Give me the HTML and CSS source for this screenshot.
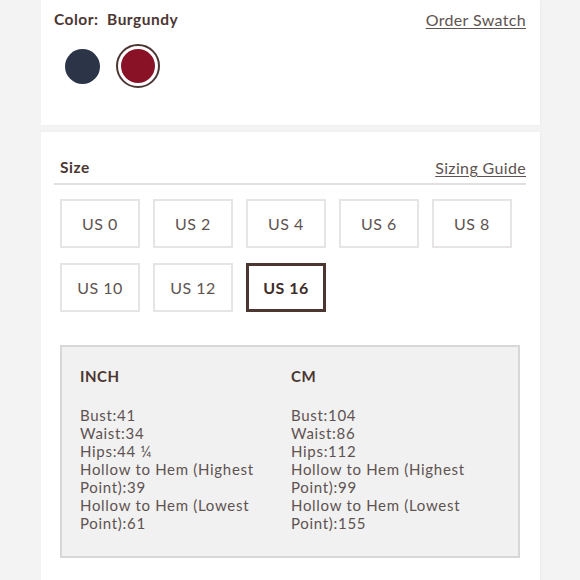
FILE: index.html
```html
<!DOCTYPE html>
<html>
<head>
<meta charset="utf-8">
<link rel="stylesheet" href="styles.css">
</head>
<body>
<div class="page">
  <section class="card card-color">
    <div class="head-row">
      <div class="label">Color:&nbsp; Burgundy</div>
      <a class="link" href="#">Order Swatch</a>
    </div>
    <div class="swatches">
      <span class="swatch"><span class="dot navy"></span></span>
      <span class="swatch selected"><span class="dot burgundy"></span></span>
    </div>
  </section>
  <section class="card card-size">
    <div class="head-row size-head">
      <div class="label">Size</div>
      <a class="link" href="#">Sizing Guide</a>
    </div>
    <div class="sizes">
      <button class="size">US 0</button>
      <button class="size">US 2</button>
      <button class="size">US 4</button>
      <button class="size">US 6</button>
      <button class="size">US 8</button>
      <button class="size">US 10</button>
      <button class="size">US 12</button>
      <button class="size active">US 16</button>
    </div>
    <div class="measure">
      <div class="col">
        <div class="col-title">INCH</div>
        <div class="col-body">Bust:41<br>Waist:34<br>Hips:44 ¼<br>Hollow to Hem (Highest Point):39<br>Hollow to Hem (Lowest Point):61</div>
      </div>
      <div class="col">
        <div class="col-title">CM</div>
        <div class="col-body">Bust:104<br>Waist:86<br>Hips:112<br>Hollow to Hem (Highest Point):99<br>Hollow to Hem (Lowest Point):155</div>
      </div>
    </div>
  </section>
</div>
</body>
</html>
```
FILE: styles.css
```css
html, body {
  margin: 0;
  padding: 0;
  background: #f3f3f3;
  font-family: "Lato", "Open Sans", sans-serif;
  color: #5a4c48;
}
.page {
  width: 499px;
  margin-left: 41px;
  display: flex;
  flex-direction: column;
  gap: 7px;
}
.card {
  background: #fff;
  box-shadow: 1px 0 2px rgba(0,0,0,0.04);
}
.card-color {
  height: 125px;
  box-sizing: border-box;
  padding: 8px 14px 0 13px;
}
.head-row {
  display: flex;
  justify-content: space-between;
  align-items: center;
  height: 22px;
}
.label {
  font-weight: 700;
  font-size: 15.5px;
  letter-spacing: 0.5px;
  color: #4b3632;
}
.link {
  font-size: 16px;
  letter-spacing: 0.35px;
  color: #5e5351;
  text-decoration: underline;
  text-underline-offset: 2px;
  text-decoration-thickness: 1px;
}
.swatches {
  display: flex;
  gap: 12px;
  margin-top: 14px;
  margin-left: 6px;
}
.swatch {
  width: 44px;
  height: 44px;
  border-radius: 50%;
  box-sizing: border-box;
  display: flex;
  align-items: center;
  justify-content: center;
}
.swatch.selected {
  border: 2px solid #4b3632;
}
.dot {
  width: 35px;
  height: 35px;
  border-radius: 50%;
}
.navy { background: #2b3547; }
.burgundy { background: #8a1227; width: 34px; height: 34px; }

.card-size {
  padding: 24px 14px 40px 13px;
}
.size-head {
  padding-left: 6px;
  padding-bottom: 5px;
  border-bottom: 2px solid #e2e0e0;
}
.sizes {
  display: grid;
  grid-template-columns: repeat(5, 80px);
  grid-auto-rows: 49px;
  column-gap: 13px;
  row-gap: 15px;
  margin: 14px 0 0 6px;
}
.size {
  background: #fff;
  border: 2px solid #e6e4e4;
  font-family: inherit;
  font-size: 16px;
  letter-spacing: 0.5px;
  color: #5e5351;
  padding: 0;
}
.size.active {
  border: 3px solid #4b3632;
  font-weight: 700;
  color: #3f2d2a;
}
.measure {
  margin: 33px 6px 0 6px;
  background: #f1f1f1;
  border: 2px solid #d8d7d7;
  display: grid;
  grid-template-columns: 211px 1fr;
  padding: 19px 20px 24px 18px;
}
.col-title {
  font-weight: 700;
  font-size: 15px;
  letter-spacing: 0.5px;
  color: #4b3632;
  line-height: 20px;
}
.col-body {
  margin-top: 20px;
  font-size: 15px;
  letter-spacing: 0.7px;
  line-height: 18px;
  color: #5e5351;
  width: 195px;
}
```
